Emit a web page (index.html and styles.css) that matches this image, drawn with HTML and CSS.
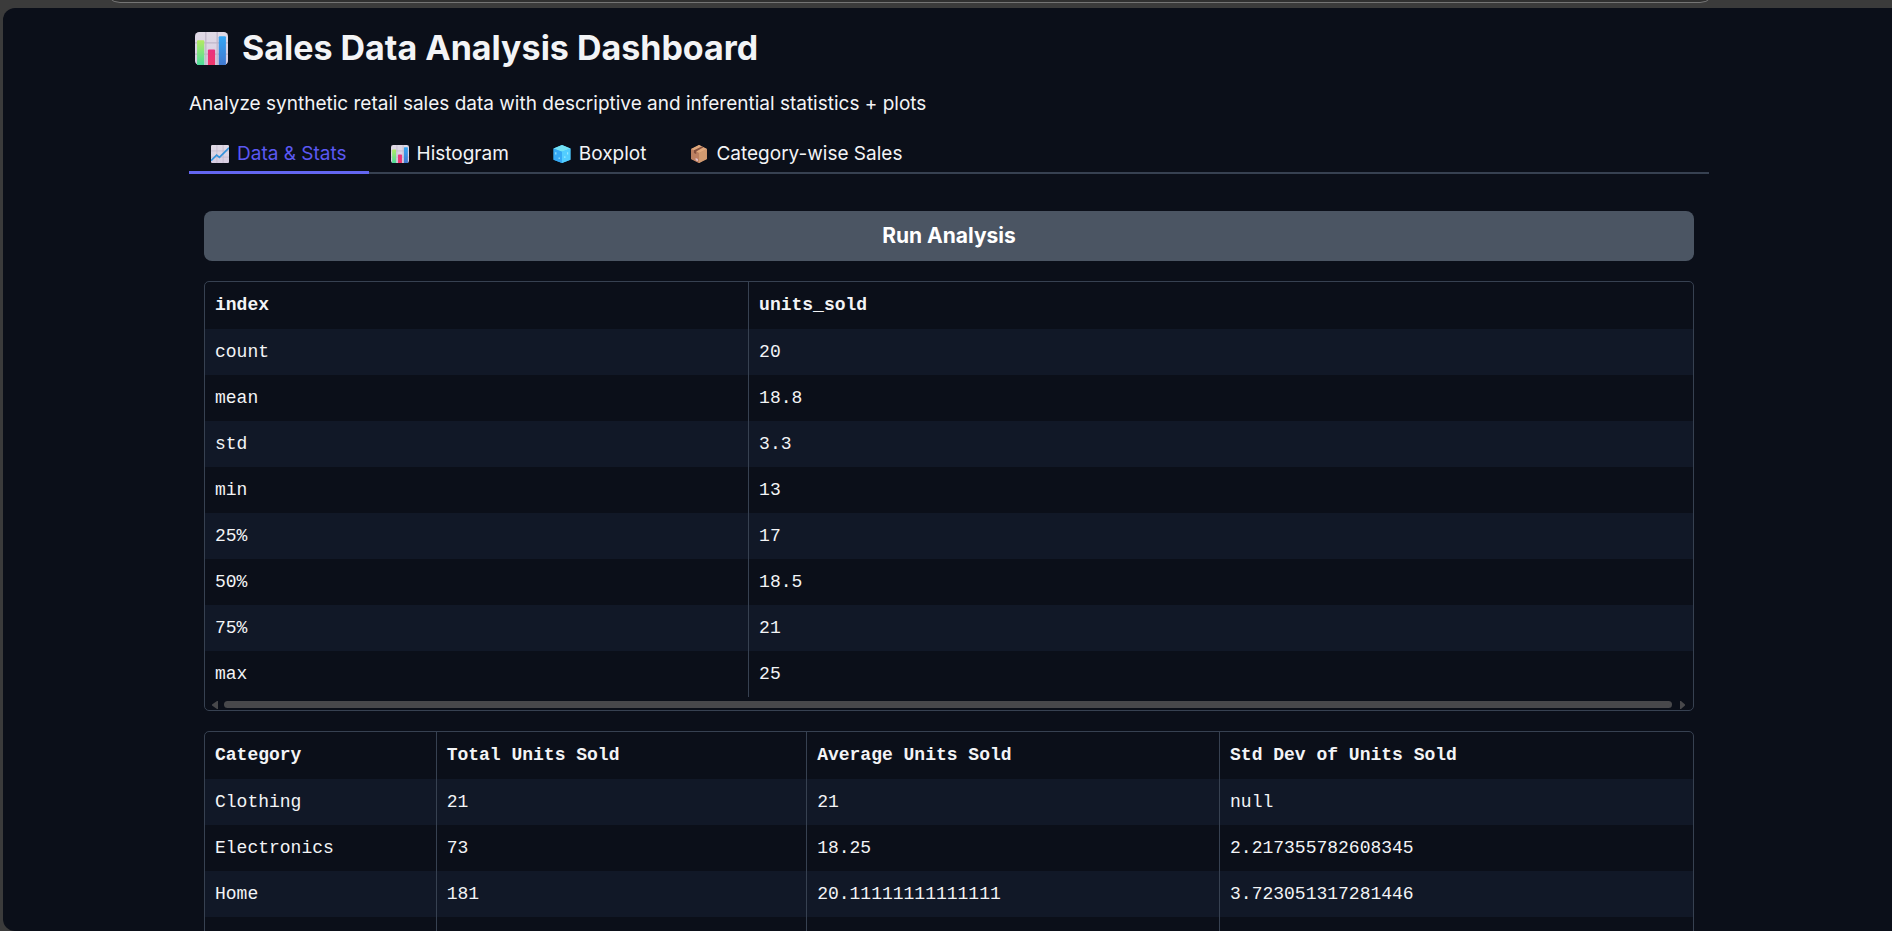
FILE: index.html
```html
<!DOCTYPE html>
<html lang="en">
<head>
<meta charset="utf-8">
<title>Sales Data Analysis Dashboard</title>
<link rel="stylesheet" href="styles.css">
</head>
<body>
<svg class="defs" aria-hidden="true">
  <defs>
    <linearGradient id="g-green" x1="0" y1="0" x2="0" y2="1"><stop offset="0" stop-color="#b4ea62"/><stop offset="1" stop-color="#4bdc9a"/></linearGradient>
    <linearGradient id="g-pink" x1="0" y1="0" x2="0" y2="1"><stop offset="0" stop-color="#e8327f"/><stop offset="1" stop-color="#f0386b"/></linearGradient>
    <linearGradient id="g-blue" x1="0" y1="0" x2="0" y2="1"><stop offset="0" stop-color="#35a6f4"/><stop offset="1" stop-color="#4279d0"/></linearGradient>
    <linearGradient id="g-paper" x1="0" y1="0" x2="0" y2="1"><stop offset="0" stop-color="#e0dae6"/><stop offset="1" stop-color="#d8cde2"/></linearGradient>
    <symbol id="bars" viewBox="0 0 32 32">
      <rect width="32" height="32" rx="4" fill="url(#g-paper)"/>
      <path d="M10.500 0V32M21.500 0V32M0 10.500H32M0 21.500H32" stroke="#bfb6c9" stroke-width="1.200"/>
      <path d="M2 32V9a1 1 0 0 1 1-1h5a1 1 0 0 1 1 1V32z" fill="url(#g-green)"/>
      <path d="M12.500 32V18a1 1 0 0 1 1-1h5a1 1 0 0 1 1 1V32z" fill="url(#g-pink)"/>
      <path d="M23 32V5a1 1 0 0 1 1-1h5a1 1 0 0 1 1 1V32z" fill="url(#g-blue)"/>
    </symbol>
    <symbol id="trend" viewBox="0 0 32 32">
      <rect width="32" height="32" rx="2" fill="url(#g-paper)"/>
      <path d="M10.500 0V32M21.500 0V32M0 10.500H32M0 21.500H32" stroke="#bfb6c9" stroke-width="1.200"/>
      <path d="M0 28L10 18L15 22L32 5" fill="none" stroke="#3593dc" stroke-width="3"/>
    </symbol>
    <symbol id="ice" viewBox="0 0 32 32">
      <path d="M16 0L31 6V26L16 32L1 26V6z" fill="#3dbcf8"/>
      <path d="M16 0L31 6L16 12L1 6z" fill="#73e2f5"/>
      <path d="M16 12L31 6V26L16 32z" fill="#52cdff"/>
      <path d="M1 6L16 12V32L1 26z" fill="#35a8f5"/>
      <path d="M5 13v4M11 22v3M21 20v3M26 13v4" stroke="#9beaff" stroke-width="2"/>
    </symbol>
    <symbol id="box" viewBox="0 0 32 32">
      <path d="M16 0L30 7V25L16 32L2 25V7z" fill="#c98e69"/>
      <path d="M16 0L30 7L16 14L2 7z" fill="#e0a87c"/>
      <path d="M16 14L30 7V25L16 32z" fill="#d19a70"/>
      <path d="M2 7L16 14V32L2 25z" fill="#bd8061"/>
      <path d="M24 4L21 2.500L7 9.500V14L11 16V11.500z" fill="#85513f"/>
      <path d="M10 23l4 2v4l-4-2z" fill="#e5c3cf"/>
    </symbol>
  </defs>
</svg>

<div class="browser-bar"><div class="address"></div></div>
<main class="page">
  <h1 class="title"><svg class="title-icon" aria-hidden="true"><use href="#bars"/></svg>Sales Data Analysis Dashboard</h1>
  <p class="subtitle">Analyze synthetic retail sales data with descriptive and inferential statistics + plots</p>

  <div class="tabs" role="tablist">
    <button class="tab selected" role="tab" aria-selected="true"><svg class="tab-icon" aria-hidden="true"><use href="#trend"/></svg>Data &amp; Stats</button>
    <button class="tab" role="tab" aria-selected="false"><svg class="tab-icon" aria-hidden="true"><use href="#bars"/></svg>Histogram</button>
    <button class="tab" role="tab" aria-selected="false"><svg class="tab-icon" aria-hidden="true"><use href="#ice"/></svg>Boxplot</button>
    <button class="tab" role="tab" aria-selected="false"><svg class="tab-icon" aria-hidden="true"><use href="#box"/></svg>Category-wise Sales</button>
  </div>

  <section class="panel" role="tabpanel">
    <button class="run">Run Analysis</button>

    <div class="card">
      <table class="grid">
        <colgroup><col class="w-index"><col></colgroup>
        <thead><tr><th>index</th><th>units_sold</th></tr></thead>
        <tbody>
          <tr><td>count</td><td>20</td></tr>
          <tr><td>mean</td><td>18.8</td></tr>
          <tr><td>std</td><td>3.3</td></tr>
          <tr><td>min</td><td>13</td></tr>
          <tr><td>25%</td><td>17</td></tr>
          <tr><td>50%</td><td>18.5</td></tr>
          <tr><td>75%</td><td>21</td></tr>
          <tr><td>max</td><td>25</td></tr>
        </tbody>
      </table>
      <div class="scrollbar" aria-hidden="true">
        <svg class="arrow" viewBox="0 0 8 8"><path d="M7 0H8V8H7L2 4.500V3.500z"/></svg>
        <div class="thumb"></div>
        <svg class="arrow" viewBox="0 0 8 8"><path d="M3 0H2V8H3L7 4.500V3.500z"/></svg>
      </div>
    </div>

    <div class="card">
      <table class="grid">
        <colgroup><col class="w-category"><col class="w-total"><col class="w-average"><col></colgroup>
        <thead><tr><th>Category</th><th>Total Units Sold</th><th>Average Units Sold</th><th>Std Dev of Units Sold</th></tr></thead>
        <tbody>
          <tr><td>Clothing</td><td>21</td><td>21</td><td>null</td></tr>
          <tr><td>Electronics</td><td>73</td><td>18.25</td><td>2.217355782608345</td></tr>
          <tr><td>Home</td><td>181</td><td>20.11111111111111</td><td>3.723051317281446</td></tr>
          <tr><td></td><td></td><td></td><td></td></tr>
        </tbody>
      </table>
    </div>
  </section>
</main>
</body>
</html>
```
FILE: styles.css
```css
* { box-sizing: border-box; }

body {
  margin: 0;
  height: 100vh;
  overflow: hidden;
  display: flex;
  flex-direction: column;
  background: #3b3b3b;
  color: #f3f4f6;
  font-family: Inter, "Noto Sans", sans-serif;
  font-size: 19px;
  line-height: 26px;
}

button { font: inherit; color: inherit; border: 0; cursor: pointer; }

.defs { position: absolute; width: 0; height: 0; }

.browser-bar {
  flex: none;
  display: flex;
  align-items: flex-end;
  height: 8px;
  padding: 0 176px 5px 104px;
  overflow: hidden;
}
.address {
  flex: 1;
  height: 32px;
  background: #303030;
  border: 1px solid #757575;
  border-radius: 16px;
}

.page {
  flex: 1;
  min-height: 0;
  overflow: hidden;
  margin-left: 3px;
  padding: 20px 183px 0 186px;
  background: #0b0f19;
  border-radius: 12px 0 0 12px;
}

.title {
  display: flex;
  align-items: center;
  gap: 14px;
  margin: 0;
  padding-left: 6px;
  font-size: 34px;
  line-height: 40px;
  font-weight: 700;
}
.title-icon { width: 33px; height: 33px; }

.subtitle { margin: 23px 0 0; }

.tabs {
  display: flex;
  margin-top: 19px;
  box-shadow: inset 0 -2px #374151;
}
.tab {
  display: flex;
  align-items: center;
  gap: 8px;
  height: 38px;
  padding: 0 22px;
  background: none;
  border-bottom: 3px solid transparent;
}
.tab.selected { color: #5b58f2; border-bottom-color: #6366f1; }
.tab-icon { width: 18px; height: 18px; }

.panel {
  display: flex;
  flex-direction: column;
  gap: 20px;
  padding: 37px 15px 0;
}

.run {
  flex: none;
  height: 50px;
  border-radius: 8px;
  background: #4b5563;
  color: #fff;
  font-size: 21px;
  font-weight: 700;
}

.card {
  flex: none;
  border: 1px solid #374151;
  border-radius: 5px;
  overflow: hidden;
}

.grid {
  width: 100%;
  table-layout: fixed;
  border-collapse: separate;
  border-spacing: 0;
  font-family: "Liberation Mono", monospace;
  font-size: 18px;
  text-align: left;
}
.grid th, .grid td { height: 46px; padding: 0 10px; }
.grid th { height: 47px; padding-bottom: 2px; }
.grid th + th, .grid td + td { border-left: 1px solid #374151; }
.grid tbody tr:nth-child(odd) { background: #111827; }

.w-index { width: 36.5%; }
.w-category { width: 15.5%; }
.w-total { width: 24.9%; }
.w-average { width: 27.75%; }

.scrollbar {
  display: flex;
  align-items: center;
  gap: 6px;
  height: 13px;
  padding: 2px 7px 0 5px;
}
.thumb { flex: 1; height: 7px; border-radius: 4px; background: #48484b; }
.arrow { width: 8px; height: 8px; fill: #48484b; }
```
